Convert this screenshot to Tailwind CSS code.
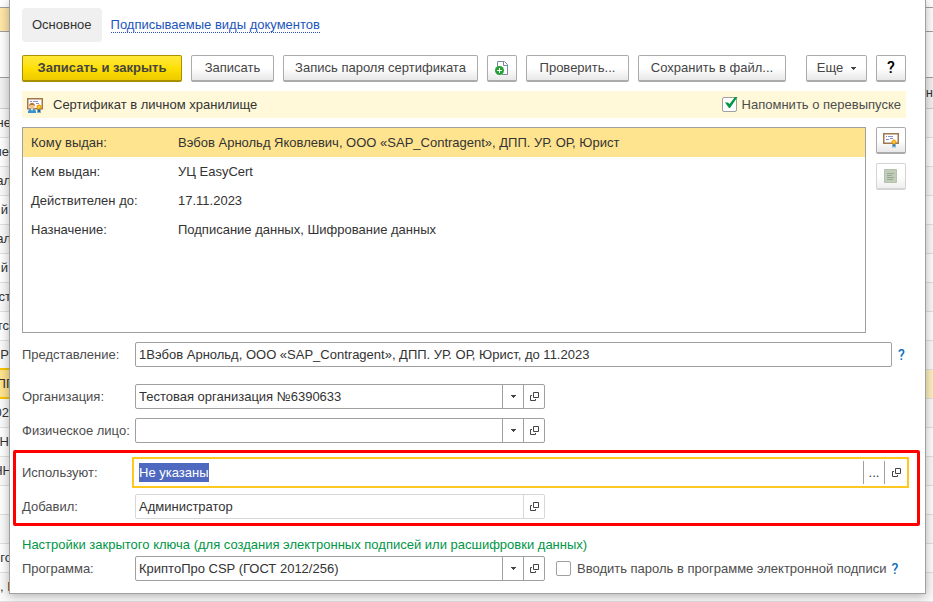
<!DOCTYPE html>
<html lang="ru">
<head>
    <meta charset="UTF-8">
    <meta name="viewport" content="width=device-width, initial-scale=1.0">
    <title>Сертификат</title>
    <script src="https://cdn.jsdelivr.net/npm/@tailwindcss/browser@4"></script>
</head>
<body class="relative h-screen overflow-hidden bg-white font-['Liberation_Sans',Arial,sans-serif] text-[13px] text-[#333333]">

    <!-- Icons used more than once -->
    <svg class="hidden">
        <symbol id="open" viewBox="0 0 9 9">
            <path d="M3.5.5h5v5h-5zM2 3.5H.5v5h5V7" fill="none" stroke="#444" />
        </symbol>
        <symbol id="arrow" viewBox="0 0 5 3">
            <path d="M0 0h5v1H4v1H3v1H2V2H1V1H0z" fill="#444" />
        </symbol>
        <symbol id="cert" viewBox="0 0 16 16">
            <path d="M.75 1.75h14.5v9.500H.75z" fill="#fff" stroke="#a07850" stroke-width="1.5" />
            <path d="M3 4.5h1M5 4.5h5M3 7.5h3M7 6.5h3" stroke="#8d8fd0" />
            <path d="M9.500 11h3v4.500h-1V14h-1v1.500h-1z" fill="#1e74b8" />
            <path d="M11 7l3 3-3 3-3-3z" fill="#f59a00" />
            <circle cx="11" cy="10" r="1.500" fill="#ffc832" />
        </symbol>
    </svg>

    <!-- List behind the dialog -->
    <table class="w-full border-collapse">
        <tbody>
            <tr class="h-[7px] border-b border-[#a0a0a0]"><td></td><td></td></tr>
            <tr class="h-6 border-b border-[#a0a0a0]"><td class="bg-[#ffe6a8]"></td><td></td></tr>
            <tr class="h-[46px] border-b border-[#a0a0a0]"><td></td><td></td></tr>
            <tr class="h-[31px] border-b border-[#cfcfcf] bg-[#f2f2f2]"><td></td><td><span class="flex w-[9px] justify-end">ен</span></td></tr>
            <tr class="h-[29px] border-b border-[#e0e0e0] bg-[#fafafa]"><td><span class="flex w-[11px] justify-end">не</span></td><td class="w-[9px]"></td></tr>
            <tr class="h-[29px] border-b border-[#e0e0e0]"><td><span class="flex w-[9px] justify-end">ие</span></td><td></td></tr>
            <tr class="h-[29px] border-b border-[#e0e0e0] bg-[#fafafa]"><td><span class="flex w-[11px] justify-end">ал</span></td><td></td></tr>
            <tr class="h-[29px] border-b border-[#e0e0e0]"><td><span class="flex w-2 justify-end">й</span></td><td></td></tr>
            <tr class="h-[29px] border-b border-[#e0e0e0] bg-[#fafafa]"><td><span class="flex w-[11px] justify-end">ал</span></td><td></td></tr>
            <tr class="h-[29px] border-b border-[#e0e0e0]"><td><span class="flex w-2 justify-end">й</span></td><td></td></tr>
            <tr class="h-[29px] border-b border-[#e0e0e0] bg-[#fafafa]"><td><span class="flex w-[11px] justify-end">тст</span></td><td></td></tr>
            <tr class="h-[29px] border-b border-[#e0e0e0]"><td><span class="flex w-[9px] justify-end">тс</span></td><td></td></tr>
            <tr class="h-[29px] border-b border-[#e0e0e0] bg-[#fafafa]"><td><span class="flex w-[9px] justify-end">Р</span></td><td></td></tr>
            <tr class="h-[29px] border-b border-[#e0e0e0]"><td class="border-y-2 border-[#f5c400] bg-[#ffe48f]"><span class="flex w-[13px] justify-end">ПГ</span></td><td class="bg-[#fff0c0]"></td></tr>
            <tr class="h-[29px] border-b border-[#e0e0e0] bg-[#fafafa]"><td><span class="flex w-[9px] justify-end">02</span></td><td></td></tr>
            <tr class="h-[29px] border-b border-[#e0e0e0]"><td><span class="flex w-[9px] justify-end">Н</span></td><td></td></tr>
            <tr class="h-[29px] border-b border-[#e0e0e0] bg-[#fafafa]"><td><span class="flex w-3 justify-end">НН</span></td><td></td></tr>
            <tr class="h-[29px] border-b border-[#e0e0e0]"><td></td><td></td></tr>
            <tr class="h-[29px] border-b border-[#e0e0e0] bg-[#fafafa]"><td></td><td></td></tr>
            <tr class="h-[29px] border-b border-[#e0e0e0]"><td><span class="flex w-3 justify-end">го</span></td><td></td></tr>
            <tr class="h-[29px] border-b border-[#e0e0e0] bg-[#fafafa]"><td>, Н</td><td></td></tr>
        </tbody>
    </table>

    <!-- Dialog -->
    <form class="absolute top-0 right-[7px] left-[9px] border border-t-0 border-[#a0a0a0] bg-white pt-2 pb-3 pl-3 shadow-[0_2px_10px_rgba(0,0,0,0.3)]">
        <nav class="flex items-center gap-[9px]">
            <a href="#" class="flex h-[34px] items-center rounded bg-[#f0f0f0] px-[10px]">Основное</a>
            <a href="#" class="border-b border-dotted border-[#2255bb] leading-[14px] text-[#2255bb]">Подписываемые виды документов</a>
        </nav>

        <!-- Toolbar -->
        <div class="mt-[13px] mr-[19px] flex gap-[9px] text-[#444444]">
            <button type="submit" class="h-[27px] w-[160px] rounded-xs border border-b-2 border-[#a89000] bg-linear-to-b from-[#ffe838] via-[#ffe000] to-[#ecca00] font-bold">Записать и закрыть</button>
            <button type="button" class="h-[27px] w-[83px] rounded-xs border border-b-2 border-[#ababab] bg-linear-to-b from-white from-50% to-[#e8e8e8]">Записать</button>
            <button type="button" class="h-[27px] w-[195px] rounded-xs border border-b-2 border-[#ababab] bg-linear-to-b from-white from-50% to-[#e8e8e8]">Запись пароля сертификата</button>
            <button type="button" aria-label="Добавить" class="flex h-[27px] w-[30px] items-center justify-center rounded-xs border border-b-2 border-[#ababab] bg-linear-to-b from-white from-50% to-[#e8e8e8]">
                <svg class="size-4" viewBox="0 0 16 16">
                    <path d="M3.500 8V1.500h7l3 3v10H8" fill="#fff" stroke="#7a8ba0" />
                    <path d="M9.500 1.500v4h4" fill="none" stroke="#7a8ba0" />
                    <circle cx="5.500" cy="10.500" r="4.500" fill="#26a035" />
                    <path d="M3 10.500h5M5.500 8v5" stroke="#fff" />
                </svg>
            </button>
            <button type="button" class="h-[27px] w-[103px] rounded-xs border border-b-2 border-[#ababab] bg-linear-to-b from-white from-50% to-[#e8e8e8]">Проверить...</button>
            <button type="button" class="h-[27px] w-[148px] rounded-xs border border-b-2 border-[#ababab] bg-linear-to-b from-white from-50% to-[#e8e8e8]">Сохранить в файл...</button>
            <button type="button" class="ml-auto flex h-[27px] w-[61px] items-center justify-center gap-2 rounded-xs border border-b-2 border-[#ababab] bg-linear-to-b from-white from-50% to-[#e8e8e8]">Еще
                <svg class="h-[3px] w-[5px]"><use href="#arrow" /></svg>
            </button>
            <button type="button" class="h-[27px] w-[30px] rounded-xs border border-b-2 border-[#ababab] bg-linear-to-b from-white from-50% to-[#e8e8e8] font-['Roboto',sans-serif] text-base leading-4 font-medium text-black">?</button>
        </div>

        <!-- Status bar -->
        <div class="mt-[9px] mr-[19px] flex h-[27px] items-center bg-[#fff9d9] px-[5px]">
            <svg class="size-4" viewBox="0 0 16 16">
                <path d="M.75 1.750h14.500v10H.75z" fill="#fff" stroke="#a07850" stroke-width="1.500" />
                <path d="M3 4.500h2M6 4.500h5M9 6.500h3" stroke="#8d8fd0" />
                <path d="M1 16v-2l2-2h4l2 2v2z" fill="#3a94cc" />
                <path d="M4 12h2l-1 2z" fill="#fff" />
                <circle cx="5" cy="9.500" r="2.500" fill="#f6c48c" />
                <path d="M2 9.500c0-5 6-5 6 0L6.500 8h-3z" fill="#b87532" />
                <path d="M10.500 11h3v5h-1v-1h-1v1h-1z" fill="#1e64a8" />
                <circle cx="12" cy="10" r="2.500" fill="#f5a300" />
                <circle cx="12" cy="10" r="1" fill="#ffd34d" />
            </svg>
            <span class="ml-[10px]">Сертификат в личном хранилище</span>
            <label class="ml-auto flex items-center gap-[5px] text-[#4d4d4d]">
                <span class="relative flex">
                    <input type="checkbox" checked class="size-[15px] appearance-none rounded-xs border border-[#a0a0a0] bg-white">
                    <svg class="absolute -top-px left-[2px] h-[13px] w-[14px]" viewBox="0 0 14 13">
                        <path d="M1 6.500h3L5.500 8 11 1h2.500L6 12H5z" fill="#009646" />
                    </svg>
                </span>
                Напомнить о перевыпуске
            </label>
        </div>

        <!-- Certificate details -->
        <div class="mt-[9px] mr-[19px] flex gap-[10px]">
            <div class="h-[206px] flex-1 border border-[#a0a0a0]">
                <table class="w-full">
                    <tbody>
                        <tr class="h-[29px] bg-[#ffe48f]"><td class="w-[147px] pl-2">Кому выдан:</td><td class="pl-2">Вэбов Арнольд Яковлевич, ООО «SAP_Contragent», ДПП. УР. ОР, Юрист</td></tr>
                        <tr class="h-[29px]"><td class="pl-2">Кем выдан:</td><td class="pl-2">УЦ EasyCert</td></tr>
                        <tr class="h-[29px]"><td class="pl-2">Действителен до:</td><td class="pl-2">17.11.2023</td></tr>
                        <tr class="h-[29px]"><td class="pl-2">Назначение:</td><td class="pl-2">Подписание данных, Шифрование данных</td></tr>
                    </tbody>
                </table>
            </div>
            <div class="flex flex-col gap-[9px]">
                <button type="button" aria-label="Показать сертификат" class="flex h-[27px] w-[30px] items-center justify-center rounded-xs border border-b-2 border-[#ababab] bg-linear-to-b from-white from-50% to-[#e8e8e8]">
                    <svg class="size-4"><use href="#cert" /></svg>
                </button>
                <button type="button" disabled aria-label="Подробно" class="flex h-[27px] w-[30px] items-center justify-center rounded-xs border border-b-2 border-[#d4d4d4] bg-linear-to-b from-white from-50% to-[#efefef]">
                    <svg class="size-[14px]" viewBox="0 0 14 14">
                        <path d="M.5.5h12v13H.5z" fill="#c0ccb8" stroke="#b4c2ae" />
                        <path d="M3 4.500h7M3 6.500h5M3 8.500h7M3 10.500h6" stroke="#97a894" />
                    </svg>
                </button>
            </div>
        </div>

        <!-- Fields -->
        <div class="mt-[9px] mr-[19px] flex items-center">
            <label for="view" class="w-[113px] text-[#4d4d4d]">Представление:</label>
            <input id="view" value="1Вэбов Арнольд, ООО «SAP_Contragent», ДПП. УР. ОР, Юрист, до 11.2023" class="h-[25px] flex-1 rounded-xs border border-[#a0a0a0] px-[3px]">
            <a href="#" class="w-[14px] pl-[6px] font-['Roboto',sans-serif] text-sm font-medium text-[#1070b8]">?</a>
        </div>
        <div class="mt-[17px] flex items-center">
            <label for="org" class="w-[113px] text-[#4d4d4d]">Организация:</label>
            <div class="flex h-[25px] w-[410px] divide-x divide-[#a0a0a0] rounded-xs border border-[#a0a0a0]">
                <input id="org" value="Тестовая организация №6390633" class="min-w-0 flex-1 px-[3px]">
                <button type="button" aria-label="Выбрать" class="flex w-[21px] items-center justify-center"><svg class="h-[3px] w-[5px]"><use href="#arrow" /></svg></button>
                <button type="button" aria-label="Открыть" class="flex w-5 items-center justify-center"><svg class="size-[9px]"><use href="#open" /></svg></button>
            </div>
        </div>
        <div class="mt-[9px] flex items-center">
            <label for="person" class="w-[113px] whitespace-nowrap text-[#4d4d4d]">Физическое лицо:</label>
            <div class="flex h-[25px] w-[410px] divide-x divide-[#a0a0a0] rounded-xs border border-[#a0a0a0]">
                <input id="person" class="min-w-0 flex-1 px-[3px]">
                <button type="button" aria-label="Выбрать" class="flex w-[21px] items-center justify-center"><svg class="h-[3px] w-[5px]"><use href="#arrow" /></svg></button>
                <button type="button" aria-label="Открыть" class="flex w-5 items-center justify-center"><svg class="size-[9px]"><use href="#open" /></svg></button>
            </div>
        </div>

        <!-- Highlighted fields -->
        <div class="mt-[7px] mr-[5px] -ml-[9px] rounded-xs border-3 border-[#ff0000] py-1 pr-2 pl-[6px]">
            <div class="flex items-center">
                <label for="users" class="w-[110px] text-[#4d4d4d]">Используют:</label>
                <div class="flex h-[31px] flex-1 items-center border-2 border-[#ffc81e]">
                    <input id="users" value="Не указаны" class="min-w-0 flex-1 px-[5px] outline-none selection:bg-[#4f69c0] selection:text-white">
                    <button type="button" aria-label="Выбрать" class="flex h-[23px] w-[21px] items-center justify-center border-l border-[#a0a0a0]">...</button>
                    <button type="button" aria-label="Открыть" class="flex h-[23px] w-[23px] items-center justify-center border-l border-[#a0a0a0]"><svg class="size-[9px]"><use href="#open" /></svg></button>
                </div>
            </div>
            <div class="mt-[6px] flex items-center">
                <label for="author" class="w-[113px] text-[#4d4d4d]">Добавил:</label>
                <div class="flex h-[25px] w-[410px] divide-x divide-[#d8d8d8] rounded-xs border border-[#d8d8d8]">
                    <input id="author" value="Администратор" readonly class="min-w-0 flex-1 px-[3px]">
                    <button type="button" aria-label="Открыть" class="flex w-5 items-center justify-center"><svg class="size-[9px]"><use href="#open" /></svg></button>
                </div>
            </div>
        </div>

        <h2 class="mt-[11px] leading-4 text-[#009646]">Настройки закрытого ключа (для создания электронных подписей или расшифровки данных)</h2>
        <div class="mt-[3px] flex items-center">
            <label for="program" class="w-[113px] text-[#4d4d4d]">Программа:</label>
            <div class="flex h-[25px] w-[410px] divide-x divide-[#a0a0a0] rounded-xs border border-[#a0a0a0]">
                <input id="program" value="КриптоПро CSP (ГОСТ 2012/256)" class="min-w-0 flex-1 px-[3px]">
                <button type="button" aria-label="Выбрать" class="flex w-[21px] items-center justify-center"><svg class="h-[3px] w-[5px]"><use href="#arrow" /></svg></button>
                <button type="button" aria-label="Открыть" class="flex w-5 items-center justify-center"><svg class="size-[9px]"><use href="#open" /></svg></button>
            </div>
            <label class="ml-[11px] flex items-center gap-[6px] text-[#4d4d4d]">
                <input type="checkbox" class="size-[15px] appearance-none rounded-xs border border-[#a0a0a0] bg-white">
                Вводить пароль в программе электронной подписи
            </label>
            <a href="#" class="ml-[5px] font-['Roboto',sans-serif] text-sm font-medium text-[#1070b8]">?</a>
        </div>
    </form>

    <script>
        // Start with the "Используют" value selected
        let users = document.getElementById("users");
        users.focus();
        users.select();
    </script>

</body>
</html>
